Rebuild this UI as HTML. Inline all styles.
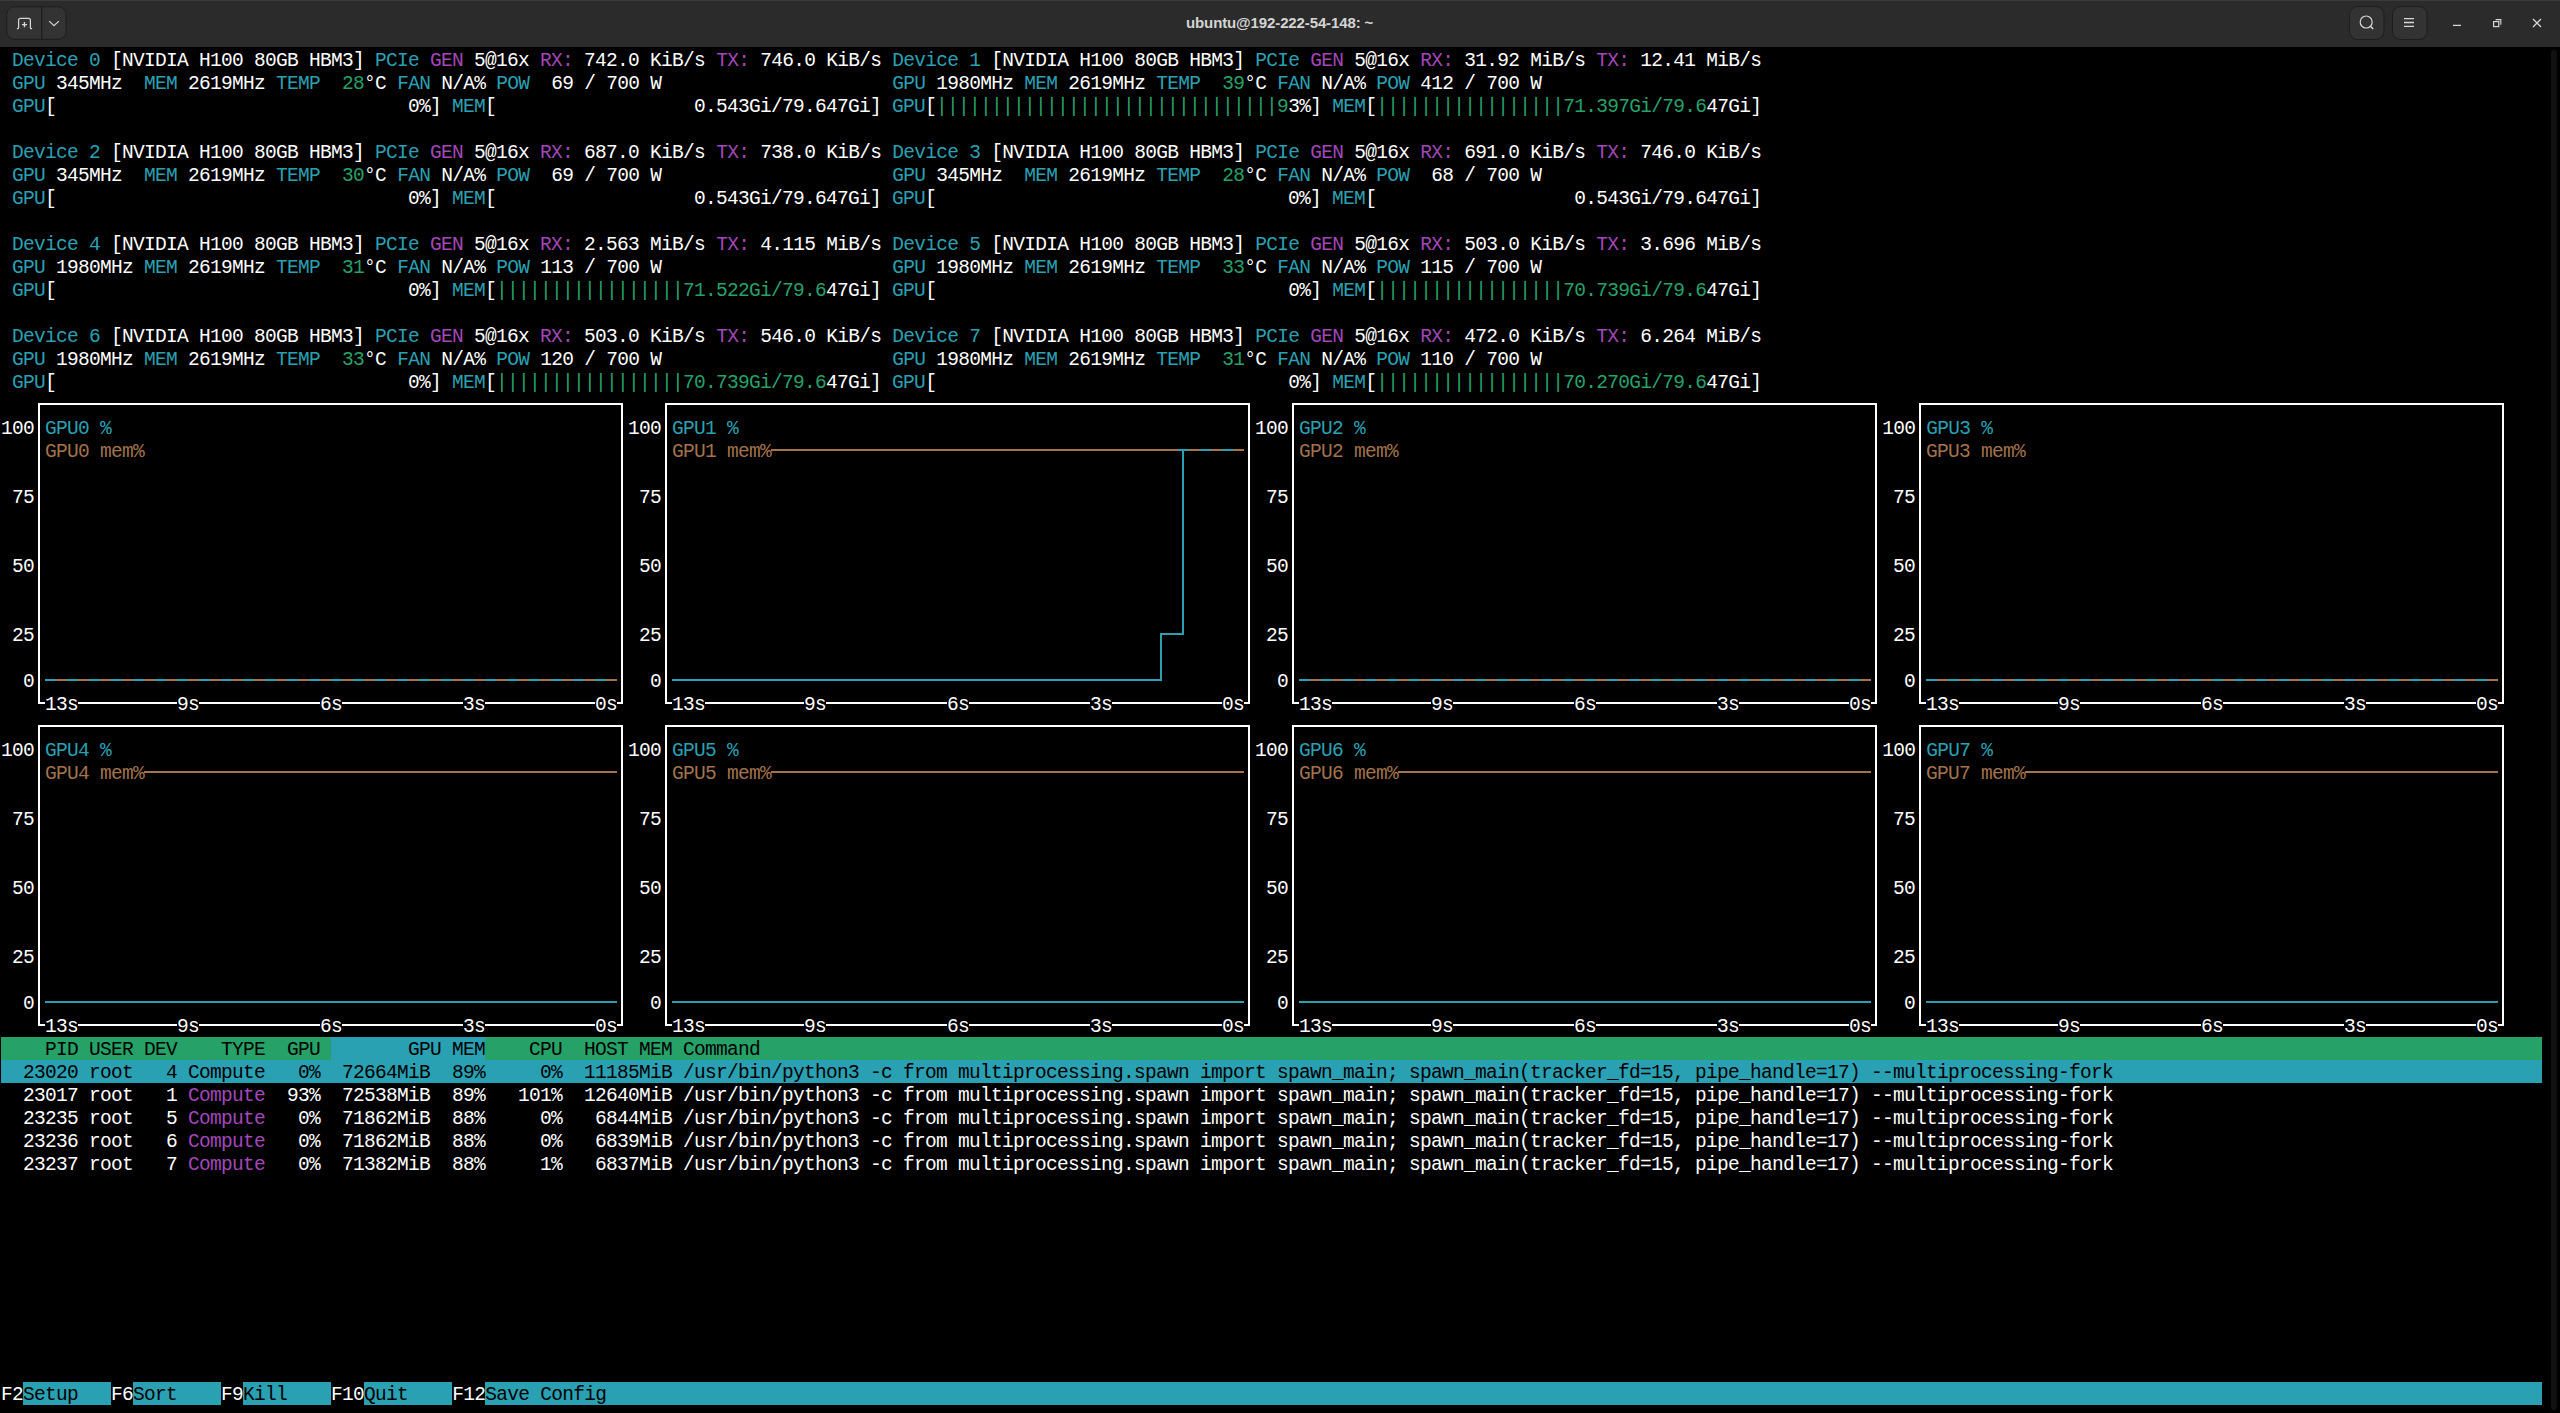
<!DOCTYPE html>
<html><head><meta charset="utf-8"><style>
html,body{margin:0;padding:0;background:#000;width:2560px;height:1413px;overflow:hidden}
#term{position:absolute;left:0;top:47px;width:2560px;height:1366px;background:#000}
#scr{position:absolute;left:0;top:0;width:2560px;height:1413px}
#scr i{position:absolute;display:block}
#scr p{position:absolute;left:1px;margin:0;white-space:pre;font-family:"Liberation Mono",monospace;font-size:19.5px;line-height:23px;height:23px;letter-spacing:-0.7015px}
#scr b{font-weight:normal}
</style></head><body>
<div style="position:absolute;left:0;top:0;width:2560px;height:47px;background:#2b2b2b;border-top:1px solid #3a3a3a;box-sizing:border-box"></div>
<svg style="position:absolute;left:0;top:0" width="2560" height="47" viewBox="0 0 2560 47">
  <rect x="6.6" y="6.8" width="59.6" height="32.5" rx="8" ry="8" fill="#333333" stroke="#1d1d1d" stroke-width="1"/>
  <rect x="41" y="7" width="1.2" height="32.5" fill="#1d1d1d"/>
  <path d="M16.9 28.5 H17.9 Q18.6 28.5 18.6 27.8 V20.3 Q18.6 18.4 20.5 18.4 H28.5 Q30.4 18.4 30.4 20.3 V27.8 Q30.4 28.5 31.1 28.5 H32.1" fill="none" stroke="#d6d6d6" stroke-width="1.25"/>
  <path d="M21.9 24.6 H27 M24.45 22.1 V27.2" fill="none" stroke="#d6d6d6" stroke-width="1.4"/>
  <path d="M49.2 21.1 L54 25.7 L58.9 21.1" fill="none" stroke="#d6d6d6" stroke-width="1.25"/>
  <rect x="2349.5" y="6.5" width="34.5" height="33" rx="8" ry="8" fill="#333333" stroke="#1d1d1d" stroke-width="1"/>
  <rect x="2392.5" y="6.5" width="34.5" height="33" rx="8" ry="8" fill="#333333" stroke="#1d1d1d" stroke-width="1"/>
  <circle cx="2366.2" cy="22" r="6" fill="none" stroke="#d6d6d6" stroke-width="1.2"/>
  <path d="M2370.4 26.2 L2373.2 29" fill="none" stroke="#d6d6d6" stroke-width="1.5"/>
  <path d="M2404 18.6 H2414 M2404 22.5 H2414 M2404 26.4 H2414" fill="none" stroke="#d6d6d6" stroke-width="1.3"/>
  <path d="M2453 25.4 H2461" fill="none" stroke="#d6d6d6" stroke-width="1.3"/>
  <rect x="2493.6" y="21.6" width="5.2" height="5" fill="none" stroke="#d6d6d6" stroke-width="1.2"/>
  <path d="M2495.6 19.6 H2500.8 V24.8" fill="none" stroke="#d6d6d6" stroke-width="1.1"/>
  <path d="M2533 19 L2541 27 M2541 19 L2533 27" fill="none" stroke="#d6d6d6" stroke-width="1.3"/>
</svg>
<div style="position:absolute;left:1186px;top:13px;width:186px;height:20px;font-family:'Liberation Sans',sans-serif;font-weight:bold;font-size:15px;color:#d4d4d4;white-space:nowrap;line-height:20px;letter-spacing:-0.12px" id="title">ubuntu@192-222-54-148: ~</div>

<div id="term"></div>
<div style="position:absolute;left:2551px;top:50px;width:6px;height:1360px;border-radius:3px;background:#111111"></div>
<div id="scr">
<i style="left:1px;top:1037px;width:330px;height:23px;background:#26a269"></i>
<i style="left:331px;top:1037px;width:154px;height:23px;background:#2aa1b3"></i>
<i style="left:485px;top:1037px;width:2057px;height:23px;background:#26a269"></i>
<i style="left:1px;top:1060px;width:2541px;height:23px;background:#2aa1b3"></i>
<i style="left:23px;top:1382px;width:88px;height:23px;background:#2aa1b3"></i>
<i style="left:133px;top:1382px;width:88px;height:23px;background:#2aa1b3"></i>
<i style="left:243px;top:1382px;width:88px;height:23px;background:#2aa1b3"></i>
<i style="left:364px;top:1382px;width:88px;height:23px;background:#2aa1b3"></i>
<i style="left:485px;top:1382px;width:2057px;height:23px;background:#2aa1b3"></i>
<i style="left:38px;top:403px;width:585px;height:2px;background:#ffffff"></i>
<i style="left:665px;top:403px;width:585px;height:2px;background:#ffffff"></i>
<i style="left:1292px;top:403px;width:585px;height:2px;background:#ffffff"></i>
<i style="left:1919px;top:403px;width:585px;height:2px;background:#ffffff"></i>
<i style="left:1178px;top:449px;width:11px;height:2px;background:#2aa1b3"></i>
<i style="left:1200px;top:449px;width:11px;height:2px;background:#2aa1b3"></i>
<i style="left:1222px;top:449px;width:11px;height:2px;background:#2aa1b3"></i>
<i style="left:771px;top:449px;width:407px;height:2px;background:#a2734c"></i>
<i style="left:1189px;top:449px;width:11px;height:2px;background:#a2734c"></i>
<i style="left:1211px;top:449px;width:11px;height:2px;background:#a2734c"></i>
<i style="left:1233px;top:449px;width:11px;height:2px;background:#a2734c"></i>
<i style="left:1160px;top:633px;width:24px;height:2px;background:#2aa1b3"></i>
<i style="left:45px;top:679px;width:11px;height:2px;background:#2aa1b3"></i>
<i style="left:67px;top:679px;width:11px;height:2px;background:#2aa1b3"></i>
<i style="left:89px;top:679px;width:11px;height:2px;background:#2aa1b3"></i>
<i style="left:111px;top:679px;width:11px;height:2px;background:#2aa1b3"></i>
<i style="left:133px;top:679px;width:11px;height:2px;background:#2aa1b3"></i>
<i style="left:155px;top:679px;width:11px;height:2px;background:#2aa1b3"></i>
<i style="left:177px;top:679px;width:11px;height:2px;background:#2aa1b3"></i>
<i style="left:199px;top:679px;width:11px;height:2px;background:#2aa1b3"></i>
<i style="left:221px;top:679px;width:11px;height:2px;background:#2aa1b3"></i>
<i style="left:243px;top:679px;width:11px;height:2px;background:#2aa1b3"></i>
<i style="left:265px;top:679px;width:11px;height:2px;background:#2aa1b3"></i>
<i style="left:287px;top:679px;width:11px;height:2px;background:#2aa1b3"></i>
<i style="left:309px;top:679px;width:11px;height:2px;background:#2aa1b3"></i>
<i style="left:331px;top:679px;width:11px;height:2px;background:#2aa1b3"></i>
<i style="left:353px;top:679px;width:11px;height:2px;background:#2aa1b3"></i>
<i style="left:375px;top:679px;width:11px;height:2px;background:#2aa1b3"></i>
<i style="left:397px;top:679px;width:11px;height:2px;background:#2aa1b3"></i>
<i style="left:419px;top:679px;width:11px;height:2px;background:#2aa1b3"></i>
<i style="left:441px;top:679px;width:11px;height:2px;background:#2aa1b3"></i>
<i style="left:463px;top:679px;width:11px;height:2px;background:#2aa1b3"></i>
<i style="left:485px;top:679px;width:11px;height:2px;background:#2aa1b3"></i>
<i style="left:507px;top:679px;width:11px;height:2px;background:#2aa1b3"></i>
<i style="left:529px;top:679px;width:11px;height:2px;background:#2aa1b3"></i>
<i style="left:551px;top:679px;width:11px;height:2px;background:#2aa1b3"></i>
<i style="left:573px;top:679px;width:11px;height:2px;background:#2aa1b3"></i>
<i style="left:595px;top:679px;width:11px;height:2px;background:#2aa1b3"></i>
<i style="left:672px;top:679px;width:490px;height:2px;background:#2aa1b3"></i>
<i style="left:1299px;top:679px;width:11px;height:2px;background:#2aa1b3"></i>
<i style="left:1321px;top:679px;width:11px;height:2px;background:#2aa1b3"></i>
<i style="left:1343px;top:679px;width:11px;height:2px;background:#2aa1b3"></i>
<i style="left:1365px;top:679px;width:11px;height:2px;background:#2aa1b3"></i>
<i style="left:1387px;top:679px;width:11px;height:2px;background:#2aa1b3"></i>
<i style="left:1409px;top:679px;width:11px;height:2px;background:#2aa1b3"></i>
<i style="left:1431px;top:679px;width:11px;height:2px;background:#2aa1b3"></i>
<i style="left:1453px;top:679px;width:11px;height:2px;background:#2aa1b3"></i>
<i style="left:1475px;top:679px;width:11px;height:2px;background:#2aa1b3"></i>
<i style="left:1497px;top:679px;width:11px;height:2px;background:#2aa1b3"></i>
<i style="left:1519px;top:679px;width:11px;height:2px;background:#2aa1b3"></i>
<i style="left:1541px;top:679px;width:11px;height:2px;background:#2aa1b3"></i>
<i style="left:1563px;top:679px;width:11px;height:2px;background:#2aa1b3"></i>
<i style="left:1585px;top:679px;width:11px;height:2px;background:#2aa1b3"></i>
<i style="left:1607px;top:679px;width:11px;height:2px;background:#2aa1b3"></i>
<i style="left:1629px;top:679px;width:11px;height:2px;background:#2aa1b3"></i>
<i style="left:1651px;top:679px;width:11px;height:2px;background:#2aa1b3"></i>
<i style="left:1673px;top:679px;width:11px;height:2px;background:#2aa1b3"></i>
<i style="left:1695px;top:679px;width:11px;height:2px;background:#2aa1b3"></i>
<i style="left:1717px;top:679px;width:11px;height:2px;background:#2aa1b3"></i>
<i style="left:1739px;top:679px;width:11px;height:2px;background:#2aa1b3"></i>
<i style="left:1761px;top:679px;width:11px;height:2px;background:#2aa1b3"></i>
<i style="left:1783px;top:679px;width:11px;height:2px;background:#2aa1b3"></i>
<i style="left:1805px;top:679px;width:11px;height:2px;background:#2aa1b3"></i>
<i style="left:1827px;top:679px;width:11px;height:2px;background:#2aa1b3"></i>
<i style="left:1849px;top:679px;width:11px;height:2px;background:#2aa1b3"></i>
<i style="left:1926px;top:679px;width:11px;height:2px;background:#2aa1b3"></i>
<i style="left:1948px;top:679px;width:11px;height:2px;background:#2aa1b3"></i>
<i style="left:1970px;top:679px;width:11px;height:2px;background:#2aa1b3"></i>
<i style="left:1992px;top:679px;width:11px;height:2px;background:#2aa1b3"></i>
<i style="left:2014px;top:679px;width:11px;height:2px;background:#2aa1b3"></i>
<i style="left:2036px;top:679px;width:11px;height:2px;background:#2aa1b3"></i>
<i style="left:2058px;top:679px;width:11px;height:2px;background:#2aa1b3"></i>
<i style="left:2080px;top:679px;width:11px;height:2px;background:#2aa1b3"></i>
<i style="left:2102px;top:679px;width:11px;height:2px;background:#2aa1b3"></i>
<i style="left:2124px;top:679px;width:11px;height:2px;background:#2aa1b3"></i>
<i style="left:2146px;top:679px;width:11px;height:2px;background:#2aa1b3"></i>
<i style="left:2168px;top:679px;width:11px;height:2px;background:#2aa1b3"></i>
<i style="left:2190px;top:679px;width:11px;height:2px;background:#2aa1b3"></i>
<i style="left:2212px;top:679px;width:11px;height:2px;background:#2aa1b3"></i>
<i style="left:2234px;top:679px;width:11px;height:2px;background:#2aa1b3"></i>
<i style="left:2256px;top:679px;width:11px;height:2px;background:#2aa1b3"></i>
<i style="left:2278px;top:679px;width:11px;height:2px;background:#2aa1b3"></i>
<i style="left:2300px;top:679px;width:11px;height:2px;background:#2aa1b3"></i>
<i style="left:2322px;top:679px;width:11px;height:2px;background:#2aa1b3"></i>
<i style="left:2344px;top:679px;width:11px;height:2px;background:#2aa1b3"></i>
<i style="left:2366px;top:679px;width:11px;height:2px;background:#2aa1b3"></i>
<i style="left:2388px;top:679px;width:11px;height:2px;background:#2aa1b3"></i>
<i style="left:2410px;top:679px;width:11px;height:2px;background:#2aa1b3"></i>
<i style="left:2432px;top:679px;width:11px;height:2px;background:#2aa1b3"></i>
<i style="left:2454px;top:679px;width:11px;height:2px;background:#2aa1b3"></i>
<i style="left:2476px;top:679px;width:11px;height:2px;background:#2aa1b3"></i>
<i style="left:56px;top:679px;width:11px;height:2px;background:#a2734c"></i>
<i style="left:78px;top:679px;width:11px;height:2px;background:#a2734c"></i>
<i style="left:100px;top:679px;width:11px;height:2px;background:#a2734c"></i>
<i style="left:122px;top:679px;width:11px;height:2px;background:#a2734c"></i>
<i style="left:144px;top:679px;width:11px;height:2px;background:#a2734c"></i>
<i style="left:166px;top:679px;width:11px;height:2px;background:#a2734c"></i>
<i style="left:188px;top:679px;width:11px;height:2px;background:#a2734c"></i>
<i style="left:210px;top:679px;width:11px;height:2px;background:#a2734c"></i>
<i style="left:232px;top:679px;width:11px;height:2px;background:#a2734c"></i>
<i style="left:254px;top:679px;width:11px;height:2px;background:#a2734c"></i>
<i style="left:276px;top:679px;width:11px;height:2px;background:#a2734c"></i>
<i style="left:298px;top:679px;width:11px;height:2px;background:#a2734c"></i>
<i style="left:320px;top:679px;width:11px;height:2px;background:#a2734c"></i>
<i style="left:342px;top:679px;width:11px;height:2px;background:#a2734c"></i>
<i style="left:364px;top:679px;width:11px;height:2px;background:#a2734c"></i>
<i style="left:386px;top:679px;width:11px;height:2px;background:#a2734c"></i>
<i style="left:408px;top:679px;width:11px;height:2px;background:#a2734c"></i>
<i style="left:430px;top:679px;width:11px;height:2px;background:#a2734c"></i>
<i style="left:452px;top:679px;width:11px;height:2px;background:#a2734c"></i>
<i style="left:474px;top:679px;width:11px;height:2px;background:#a2734c"></i>
<i style="left:496px;top:679px;width:11px;height:2px;background:#a2734c"></i>
<i style="left:518px;top:679px;width:11px;height:2px;background:#a2734c"></i>
<i style="left:540px;top:679px;width:11px;height:2px;background:#a2734c"></i>
<i style="left:562px;top:679px;width:11px;height:2px;background:#a2734c"></i>
<i style="left:584px;top:679px;width:11px;height:2px;background:#a2734c"></i>
<i style="left:606px;top:679px;width:11px;height:2px;background:#a2734c"></i>
<i style="left:1310px;top:679px;width:11px;height:2px;background:#a2734c"></i>
<i style="left:1332px;top:679px;width:11px;height:2px;background:#a2734c"></i>
<i style="left:1354px;top:679px;width:11px;height:2px;background:#a2734c"></i>
<i style="left:1376px;top:679px;width:11px;height:2px;background:#a2734c"></i>
<i style="left:1398px;top:679px;width:11px;height:2px;background:#a2734c"></i>
<i style="left:1420px;top:679px;width:11px;height:2px;background:#a2734c"></i>
<i style="left:1442px;top:679px;width:11px;height:2px;background:#a2734c"></i>
<i style="left:1464px;top:679px;width:11px;height:2px;background:#a2734c"></i>
<i style="left:1486px;top:679px;width:11px;height:2px;background:#a2734c"></i>
<i style="left:1508px;top:679px;width:11px;height:2px;background:#a2734c"></i>
<i style="left:1530px;top:679px;width:11px;height:2px;background:#a2734c"></i>
<i style="left:1552px;top:679px;width:11px;height:2px;background:#a2734c"></i>
<i style="left:1574px;top:679px;width:11px;height:2px;background:#a2734c"></i>
<i style="left:1596px;top:679px;width:11px;height:2px;background:#a2734c"></i>
<i style="left:1618px;top:679px;width:11px;height:2px;background:#a2734c"></i>
<i style="left:1640px;top:679px;width:11px;height:2px;background:#a2734c"></i>
<i style="left:1662px;top:679px;width:11px;height:2px;background:#a2734c"></i>
<i style="left:1684px;top:679px;width:11px;height:2px;background:#a2734c"></i>
<i style="left:1706px;top:679px;width:11px;height:2px;background:#a2734c"></i>
<i style="left:1728px;top:679px;width:11px;height:2px;background:#a2734c"></i>
<i style="left:1750px;top:679px;width:11px;height:2px;background:#a2734c"></i>
<i style="left:1772px;top:679px;width:11px;height:2px;background:#a2734c"></i>
<i style="left:1794px;top:679px;width:11px;height:2px;background:#a2734c"></i>
<i style="left:1816px;top:679px;width:11px;height:2px;background:#a2734c"></i>
<i style="left:1838px;top:679px;width:11px;height:2px;background:#a2734c"></i>
<i style="left:1860px;top:679px;width:11px;height:2px;background:#a2734c"></i>
<i style="left:1937px;top:679px;width:11px;height:2px;background:#a2734c"></i>
<i style="left:1959px;top:679px;width:11px;height:2px;background:#a2734c"></i>
<i style="left:1981px;top:679px;width:11px;height:2px;background:#a2734c"></i>
<i style="left:2003px;top:679px;width:11px;height:2px;background:#a2734c"></i>
<i style="left:2025px;top:679px;width:11px;height:2px;background:#a2734c"></i>
<i style="left:2047px;top:679px;width:11px;height:2px;background:#a2734c"></i>
<i style="left:2069px;top:679px;width:11px;height:2px;background:#a2734c"></i>
<i style="left:2091px;top:679px;width:11px;height:2px;background:#a2734c"></i>
<i style="left:2113px;top:679px;width:11px;height:2px;background:#a2734c"></i>
<i style="left:2135px;top:679px;width:11px;height:2px;background:#a2734c"></i>
<i style="left:2157px;top:679px;width:11px;height:2px;background:#a2734c"></i>
<i style="left:2179px;top:679px;width:11px;height:2px;background:#a2734c"></i>
<i style="left:2201px;top:679px;width:11px;height:2px;background:#a2734c"></i>
<i style="left:2223px;top:679px;width:11px;height:2px;background:#a2734c"></i>
<i style="left:2245px;top:679px;width:11px;height:2px;background:#a2734c"></i>
<i style="left:2267px;top:679px;width:11px;height:2px;background:#a2734c"></i>
<i style="left:2289px;top:679px;width:11px;height:2px;background:#a2734c"></i>
<i style="left:2311px;top:679px;width:11px;height:2px;background:#a2734c"></i>
<i style="left:2333px;top:679px;width:11px;height:2px;background:#a2734c"></i>
<i style="left:2355px;top:679px;width:11px;height:2px;background:#a2734c"></i>
<i style="left:2377px;top:679px;width:11px;height:2px;background:#a2734c"></i>
<i style="left:2399px;top:679px;width:11px;height:2px;background:#a2734c"></i>
<i style="left:2421px;top:679px;width:11px;height:2px;background:#a2734c"></i>
<i style="left:2443px;top:679px;width:11px;height:2px;background:#a2734c"></i>
<i style="left:2465px;top:679px;width:11px;height:2px;background:#a2734c"></i>
<i style="left:2487px;top:679px;width:11px;height:2px;background:#a2734c"></i>
<i style="left:38px;top:702px;width:7px;height:2px;background:#ffffff"></i>
<i style="left:78px;top:702px;width:99px;height:2px;background:#ffffff"></i>
<i style="left:199px;top:702px;width:121px;height:2px;background:#ffffff"></i>
<i style="left:342px;top:702px;width:121px;height:2px;background:#ffffff"></i>
<i style="left:485px;top:702px;width:110px;height:2px;background:#ffffff"></i>
<i style="left:617px;top:702px;width:6px;height:2px;background:#ffffff"></i>
<i style="left:665px;top:702px;width:7px;height:2px;background:#ffffff"></i>
<i style="left:705px;top:702px;width:99px;height:2px;background:#ffffff"></i>
<i style="left:826px;top:702px;width:121px;height:2px;background:#ffffff"></i>
<i style="left:969px;top:702px;width:121px;height:2px;background:#ffffff"></i>
<i style="left:1112px;top:702px;width:110px;height:2px;background:#ffffff"></i>
<i style="left:1244px;top:702px;width:6px;height:2px;background:#ffffff"></i>
<i style="left:1292px;top:702px;width:7px;height:2px;background:#ffffff"></i>
<i style="left:1332px;top:702px;width:99px;height:2px;background:#ffffff"></i>
<i style="left:1453px;top:702px;width:121px;height:2px;background:#ffffff"></i>
<i style="left:1596px;top:702px;width:121px;height:2px;background:#ffffff"></i>
<i style="left:1739px;top:702px;width:110px;height:2px;background:#ffffff"></i>
<i style="left:1871px;top:702px;width:6px;height:2px;background:#ffffff"></i>
<i style="left:1919px;top:702px;width:7px;height:2px;background:#ffffff"></i>
<i style="left:1959px;top:702px;width:99px;height:2px;background:#ffffff"></i>
<i style="left:2080px;top:702px;width:121px;height:2px;background:#ffffff"></i>
<i style="left:2223px;top:702px;width:121px;height:2px;background:#ffffff"></i>
<i style="left:2366px;top:702px;width:110px;height:2px;background:#ffffff"></i>
<i style="left:2498px;top:702px;width:6px;height:2px;background:#ffffff"></i>
<i style="left:38px;top:725px;width:585px;height:2px;background:#ffffff"></i>
<i style="left:665px;top:725px;width:585px;height:2px;background:#ffffff"></i>
<i style="left:1292px;top:725px;width:585px;height:2px;background:#ffffff"></i>
<i style="left:1919px;top:725px;width:585px;height:2px;background:#ffffff"></i>
<i style="left:144px;top:771px;width:473px;height:2px;background:#a2734c"></i>
<i style="left:771px;top:771px;width:473px;height:2px;background:#a2734c"></i>
<i style="left:1398px;top:771px;width:473px;height:2px;background:#a2734c"></i>
<i style="left:2025px;top:771px;width:473px;height:2px;background:#a2734c"></i>
<i style="left:45px;top:1001px;width:572px;height:2px;background:#2aa1b3"></i>
<i style="left:672px;top:1001px;width:572px;height:2px;background:#2aa1b3"></i>
<i style="left:1299px;top:1001px;width:572px;height:2px;background:#2aa1b3"></i>
<i style="left:1926px;top:1001px;width:572px;height:2px;background:#2aa1b3"></i>
<i style="left:38px;top:1024px;width:7px;height:2px;background:#ffffff"></i>
<i style="left:78px;top:1024px;width:99px;height:2px;background:#ffffff"></i>
<i style="left:199px;top:1024px;width:121px;height:2px;background:#ffffff"></i>
<i style="left:342px;top:1024px;width:121px;height:2px;background:#ffffff"></i>
<i style="left:485px;top:1024px;width:110px;height:2px;background:#ffffff"></i>
<i style="left:617px;top:1024px;width:6px;height:2px;background:#ffffff"></i>
<i style="left:665px;top:1024px;width:7px;height:2px;background:#ffffff"></i>
<i style="left:705px;top:1024px;width:99px;height:2px;background:#ffffff"></i>
<i style="left:826px;top:1024px;width:121px;height:2px;background:#ffffff"></i>
<i style="left:969px;top:1024px;width:121px;height:2px;background:#ffffff"></i>
<i style="left:1112px;top:1024px;width:110px;height:2px;background:#ffffff"></i>
<i style="left:1244px;top:1024px;width:6px;height:2px;background:#ffffff"></i>
<i style="left:1292px;top:1024px;width:7px;height:2px;background:#ffffff"></i>
<i style="left:1332px;top:1024px;width:99px;height:2px;background:#ffffff"></i>
<i style="left:1453px;top:1024px;width:121px;height:2px;background:#ffffff"></i>
<i style="left:1596px;top:1024px;width:121px;height:2px;background:#ffffff"></i>
<i style="left:1739px;top:1024px;width:110px;height:2px;background:#ffffff"></i>
<i style="left:1871px;top:1024px;width:6px;height:2px;background:#ffffff"></i>
<i style="left:1919px;top:1024px;width:7px;height:2px;background:#ffffff"></i>
<i style="left:1959px;top:1024px;width:99px;height:2px;background:#ffffff"></i>
<i style="left:2080px;top:1024px;width:121px;height:2px;background:#ffffff"></i>
<i style="left:2223px;top:1024px;width:121px;height:2px;background:#ffffff"></i>
<i style="left:2366px;top:1024px;width:110px;height:2px;background:#ffffff"></i>
<i style="left:2498px;top:1024px;width:6px;height:2px;background:#ffffff"></i>
<i style="left:38px;top:403px;width:2px;height:301px;background:#ffffff"></i>
<i style="left:38px;top:725px;width:2px;height:301px;background:#ffffff"></i>
<i style="left:621px;top:403px;width:2px;height:301px;background:#ffffff"></i>
<i style="left:621px;top:725px;width:2px;height:301px;background:#ffffff"></i>
<i style="left:665px;top:403px;width:2px;height:301px;background:#ffffff"></i>
<i style="left:665px;top:725px;width:2px;height:301px;background:#ffffff"></i>
<i style="left:1160px;top:633px;width:2px;height:48px;background:#2aa1b3"></i>
<i style="left:1182px;top:449px;width:2px;height:186px;background:#2aa1b3"></i>
<i style="left:1248px;top:403px;width:2px;height:301px;background:#ffffff"></i>
<i style="left:1248px;top:725px;width:2px;height:301px;background:#ffffff"></i>
<i style="left:1292px;top:403px;width:2px;height:301px;background:#ffffff"></i>
<i style="left:1292px;top:725px;width:2px;height:301px;background:#ffffff"></i>
<i style="left:1875px;top:403px;width:2px;height:301px;background:#ffffff"></i>
<i style="left:1875px;top:725px;width:2px;height:301px;background:#ffffff"></i>
<i style="left:1919px;top:403px;width:2px;height:301px;background:#ffffff"></i>
<i style="left:1919px;top:725px;width:2px;height:301px;background:#ffffff"></i>
<i style="left:2502px;top:403px;width:2px;height:301px;background:#ffffff"></i>
<i style="left:2502px;top:725px;width:2px;height:301px;background:#ffffff"></i>
<p style="top:50px"><b style="color:#ffffff"> </b><b style="color:#2aa1b3">Device 0 </b><b style="color:#ffffff">[NVIDIA H100 80GB HBM3] </b><b style="color:#2aa1b3">PCIe </b><b style="color:#a347ba">GEN </b><b style="color:#ffffff">5@16x </b><b style="color:#a347ba">RX: </b><b style="color:#ffffff">742.0 KiB/s </b><b style="color:#a347ba">TX: </b><b style="color:#ffffff">746.0 KiB/s </b><b style="color:#2aa1b3">Device 1 </b><b style="color:#ffffff">[NVIDIA H100 80GB HBM3] </b><b style="color:#2aa1b3">PCIe </b><b style="color:#a347ba">GEN </b><b style="color:#ffffff">5@16x </b><b style="color:#a347ba">RX: </b><b style="color:#ffffff">31.92 MiB/s </b><b style="color:#a347ba">TX: </b><b style="color:#ffffff">12.41 MiB/s</b></p>
<p style="top:73px"><b style="color:#ffffff"> </b><b style="color:#2aa1b3">GPU </b><b style="color:#ffffff">345MHz  </b><b style="color:#2aa1b3">MEM </b><b style="color:#ffffff">2619MHz </b><b style="color:#2aa1b3">TEMP  </b><b style="color:#26a269">28</b><b style="color:#ffffff">°C </b><b style="color:#2aa1b3">FAN </b><b style="color:#ffffff">N/A% </b><b style="color:#2aa1b3">POW  </b><b style="color:#ffffff">69 / 700 W                     </b><b style="color:#2aa1b3">GPU </b><b style="color:#ffffff">1980MHz </b><b style="color:#2aa1b3">MEM </b><b style="color:#ffffff">2619MHz </b><b style="color:#2aa1b3">TEMP  </b><b style="color:#26a269">39</b><b style="color:#ffffff">°C </b><b style="color:#2aa1b3">FAN </b><b style="color:#ffffff">N/A% </b><b style="color:#2aa1b3">POW </b><b style="color:#ffffff">412 / 700 W</b></p>
<p style="top:96px"><b style="color:#ffffff"> </b><b style="color:#2aa1b3">GPU</b><b style="color:#ffffff">[                                0%] </b><b style="color:#2aa1b3">MEM</b><b style="color:#ffffff">[                  0.543Gi/79.647Gi] </b><b style="color:#2aa1b3">GPU</b><b style="color:#ffffff">[</b><b style="color:#26a269">|||||||||||||||||||||||||||||||9</b><b style="color:#ffffff">3%] </b><b style="color:#2aa1b3">MEM</b><b style="color:#ffffff">[</b><b style="color:#26a269">|||||||||||||||||71.397Gi/79.6</b><b style="color:#ffffff">47Gi]</b></p>
<p style="top:142px"><b style="color:#ffffff"> </b><b style="color:#2aa1b3">Device 2 </b><b style="color:#ffffff">[NVIDIA H100 80GB HBM3] </b><b style="color:#2aa1b3">PCIe </b><b style="color:#a347ba">GEN </b><b style="color:#ffffff">5@16x </b><b style="color:#a347ba">RX: </b><b style="color:#ffffff">687.0 KiB/s </b><b style="color:#a347ba">TX: </b><b style="color:#ffffff">738.0 KiB/s </b><b style="color:#2aa1b3">Device 3 </b><b style="color:#ffffff">[NVIDIA H100 80GB HBM3] </b><b style="color:#2aa1b3">PCIe </b><b style="color:#a347ba">GEN </b><b style="color:#ffffff">5@16x </b><b style="color:#a347ba">RX: </b><b style="color:#ffffff">691.0 KiB/s </b><b style="color:#a347ba">TX: </b><b style="color:#ffffff">746.0 KiB/s</b></p>
<p style="top:165px"><b style="color:#ffffff"> </b><b style="color:#2aa1b3">GPU </b><b style="color:#ffffff">345MHz  </b><b style="color:#2aa1b3">MEM </b><b style="color:#ffffff">2619MHz </b><b style="color:#2aa1b3">TEMP  </b><b style="color:#26a269">30</b><b style="color:#ffffff">°C </b><b style="color:#2aa1b3">FAN </b><b style="color:#ffffff">N/A% </b><b style="color:#2aa1b3">POW  </b><b style="color:#ffffff">69 / 700 W                     </b><b style="color:#2aa1b3">GPU </b><b style="color:#ffffff">345MHz  </b><b style="color:#2aa1b3">MEM </b><b style="color:#ffffff">2619MHz </b><b style="color:#2aa1b3">TEMP  </b><b style="color:#26a269">28</b><b style="color:#ffffff">°C </b><b style="color:#2aa1b3">FAN </b><b style="color:#ffffff">N/A% </b><b style="color:#2aa1b3">POW  </b><b style="color:#ffffff">68 / 700 W</b></p>
<p style="top:188px"><b style="color:#ffffff"> </b><b style="color:#2aa1b3">GPU</b><b style="color:#ffffff">[                                0%] </b><b style="color:#2aa1b3">MEM</b><b style="color:#ffffff">[                  0.543Gi/79.647Gi] </b><b style="color:#2aa1b3">GPU</b><b style="color:#ffffff">[                                0%] </b><b style="color:#2aa1b3">MEM</b><b style="color:#ffffff">[                  0.543Gi/79.647Gi]</b></p>
<p style="top:234px"><b style="color:#ffffff"> </b><b style="color:#2aa1b3">Device 4 </b><b style="color:#ffffff">[NVIDIA H100 80GB HBM3] </b><b style="color:#2aa1b3">PCIe </b><b style="color:#a347ba">GEN </b><b style="color:#ffffff">5@16x </b><b style="color:#a347ba">RX: </b><b style="color:#ffffff">2.563 MiB/s </b><b style="color:#a347ba">TX: </b><b style="color:#ffffff">4.115 MiB/s </b><b style="color:#2aa1b3">Device 5 </b><b style="color:#ffffff">[NVIDIA H100 80GB HBM3] </b><b style="color:#2aa1b3">PCIe </b><b style="color:#a347ba">GEN </b><b style="color:#ffffff">5@16x </b><b style="color:#a347ba">RX: </b><b style="color:#ffffff">503.0 KiB/s </b><b style="color:#a347ba">TX: </b><b style="color:#ffffff">3.696 MiB/s</b></p>
<p style="top:257px"><b style="color:#ffffff"> </b><b style="color:#2aa1b3">GPU </b><b style="color:#ffffff">1980MHz </b><b style="color:#2aa1b3">MEM </b><b style="color:#ffffff">2619MHz </b><b style="color:#2aa1b3">TEMP  </b><b style="color:#26a269">31</b><b style="color:#ffffff">°C </b><b style="color:#2aa1b3">FAN </b><b style="color:#ffffff">N/A% </b><b style="color:#2aa1b3">POW </b><b style="color:#ffffff">113 / 700 W                     </b><b style="color:#2aa1b3">GPU </b><b style="color:#ffffff">1980MHz </b><b style="color:#2aa1b3">MEM </b><b style="color:#ffffff">2619MHz </b><b style="color:#2aa1b3">TEMP  </b><b style="color:#26a269">33</b><b style="color:#ffffff">°C </b><b style="color:#2aa1b3">FAN </b><b style="color:#ffffff">N/A% </b><b style="color:#2aa1b3">POW </b><b style="color:#ffffff">115 / 700 W</b></p>
<p style="top:280px"><b style="color:#ffffff"> </b><b style="color:#2aa1b3">GPU</b><b style="color:#ffffff">[                                0%] </b><b style="color:#2aa1b3">MEM</b><b style="color:#ffffff">[</b><b style="color:#26a269">|||||||||||||||||71.522Gi/79.6</b><b style="color:#ffffff">47Gi] </b><b style="color:#2aa1b3">GPU</b><b style="color:#ffffff">[                                0%] </b><b style="color:#2aa1b3">MEM</b><b style="color:#ffffff">[</b><b style="color:#26a269">|||||||||||||||||70.739Gi/79.6</b><b style="color:#ffffff">47Gi]</b></p>
<p style="top:326px"><b style="color:#ffffff"> </b><b style="color:#2aa1b3">Device 6 </b><b style="color:#ffffff">[NVIDIA H100 80GB HBM3] </b><b style="color:#2aa1b3">PCIe </b><b style="color:#a347ba">GEN </b><b style="color:#ffffff">5@16x </b><b style="color:#a347ba">RX: </b><b style="color:#ffffff">503.0 KiB/s </b><b style="color:#a347ba">TX: </b><b style="color:#ffffff">546.0 KiB/s </b><b style="color:#2aa1b3">Device 7 </b><b style="color:#ffffff">[NVIDIA H100 80GB HBM3] </b><b style="color:#2aa1b3">PCIe </b><b style="color:#a347ba">GEN </b><b style="color:#ffffff">5@16x </b><b style="color:#a347ba">RX: </b><b style="color:#ffffff">472.0 KiB/s </b><b style="color:#a347ba">TX: </b><b style="color:#ffffff">6.264 MiB/s</b></p>
<p style="top:349px"><b style="color:#ffffff"> </b><b style="color:#2aa1b3">GPU </b><b style="color:#ffffff">1980MHz </b><b style="color:#2aa1b3">MEM </b><b style="color:#ffffff">2619MHz </b><b style="color:#2aa1b3">TEMP  </b><b style="color:#26a269">33</b><b style="color:#ffffff">°C </b><b style="color:#2aa1b3">FAN </b><b style="color:#ffffff">N/A% </b><b style="color:#2aa1b3">POW </b><b style="color:#ffffff">120 / 700 W                     </b><b style="color:#2aa1b3">GPU </b><b style="color:#ffffff">1980MHz </b><b style="color:#2aa1b3">MEM </b><b style="color:#ffffff">2619MHz </b><b style="color:#2aa1b3">TEMP  </b><b style="color:#26a269">31</b><b style="color:#ffffff">°C </b><b style="color:#2aa1b3">FAN </b><b style="color:#ffffff">N/A% </b><b style="color:#2aa1b3">POW </b><b style="color:#ffffff">110 / 700 W</b></p>
<p style="top:372px"><b style="color:#ffffff"> </b><b style="color:#2aa1b3">GPU</b><b style="color:#ffffff">[                                0%] </b><b style="color:#2aa1b3">MEM</b><b style="color:#ffffff">[</b><b style="color:#26a269">|||||||||||||||||70.739Gi/79.6</b><b style="color:#ffffff">47Gi] </b><b style="color:#2aa1b3">GPU</b><b style="color:#ffffff">[                                0%] </b><b style="color:#2aa1b3">MEM</b><b style="color:#ffffff">[</b><b style="color:#26a269">|||||||||||||||||70.270Gi/79.6</b><b style="color:#ffffff">47Gi]</b></p>
<p style="top:418px"><b style="color:#ffffff">100 </b><b style="color:#2aa1b3">GPU0 %                                               </b><b style="color:#ffffff">100 </b><b style="color:#2aa1b3">GPU1 %                                               </b><b style="color:#ffffff">100 </b><b style="color:#2aa1b3">GPU2 %                                               </b><b style="color:#ffffff">100 </b><b style="color:#2aa1b3">GPU3 %</b></p>
<p style="top:441px"><b style="color:#ffffff">    </b><b style="color:#a2734c">GPU0 mem%                                                GPU1 mem%                                                GPU2 mem%                                                GPU3 mem%</b></p>
<p style="top:487px"><b style="color:#ffffff"> 75                                                       75                                                       75                                                       75</b></p>
<p style="top:556px"><b style="color:#ffffff"> 50                                                       50                                                       50                                                       50</b></p>
<p style="top:625px"><b style="color:#ffffff"> 25                                                       25                                                       25                                                       25</b></p>
<p style="top:671px"><b style="color:#ffffff">  0                                                        0                                                        0                                                        0</b></p>
<p style="top:694px"><b style="color:#ffffff">    13s         9s           6s           3s          0s     13s         9s           6s           3s          0s     13s         9s           6s           3s          0s     13s         9s           6s           3s          0s</b></p>
<p style="top:740px"><b style="color:#ffffff">100 </b><b style="color:#2aa1b3">GPU4 %                                               </b><b style="color:#ffffff">100 </b><b style="color:#2aa1b3">GPU5 %                                               </b><b style="color:#ffffff">100 </b><b style="color:#2aa1b3">GPU6 %                                               </b><b style="color:#ffffff">100 </b><b style="color:#2aa1b3">GPU7 %</b></p>
<p style="top:763px"><b style="color:#ffffff">    </b><b style="color:#a2734c">GPU4 mem%                                                GPU5 mem%                                                GPU6 mem%                                                GPU7 mem%</b></p>
<p style="top:809px"><b style="color:#ffffff"> 75                                                       75                                                       75                                                       75</b></p>
<p style="top:878px"><b style="color:#ffffff"> 50                                                       50                                                       50                                                       50</b></p>
<p style="top:947px"><b style="color:#ffffff"> 25                                                       25                                                       25                                                       25</b></p>
<p style="top:993px"><b style="color:#ffffff">  0                                                        0                                                        0                                                        0</b></p>
<p style="top:1016px"><b style="color:#ffffff">    13s         9s           6s           3s          0s     13s         9s           6s           3s          0s     13s         9s           6s           3s          0s     13s         9s           6s           3s          0s</b></p>
<p style="top:1039px"><b style="color:#000000">    PID USER DEV    TYPE  GPU        GPU MEM    CPU  HOST MEM Command</b></p>
<p style="top:1062px"><b style="color:#ffffff">  </b><b style="color:#000000">23020 root   4 Compute   0%  72664MiB  89%     0%  11185MiB /usr/bin/python3 -c from multiprocessing.spawn import spawn_main; spawn_main(tracker_fd=15, pipe_handle=17) --multiprocessing-fork</b></p>
<p style="top:1085px"><b style="color:#ffffff">  23017 root   1 </b><b style="color:#a347ba">Compute  </b><b style="color:#ffffff">93%  72538MiB  89%   101%  12640MiB /usr/bin/python3 -c from multiprocessing.spawn import spawn_main; spawn_main(tracker_fd=15, pipe_handle=17) --multiprocessing-fork</b></p>
<p style="top:1108px"><b style="color:#ffffff">  23235 root   5 </b><b style="color:#a347ba">Compute   </b><b style="color:#ffffff">0%  71862MiB  88%     0%   6844MiB /usr/bin/python3 -c from multiprocessing.spawn import spawn_main; spawn_main(tracker_fd=15, pipe_handle=17) --multiprocessing-fork</b></p>
<p style="top:1131px"><b style="color:#ffffff">  23236 root   6 </b><b style="color:#a347ba">Compute   </b><b style="color:#ffffff">0%  71862MiB  88%     0%   6839MiB /usr/bin/python3 -c from multiprocessing.spawn import spawn_main; spawn_main(tracker_fd=15, pipe_handle=17) --multiprocessing-fork</b></p>
<p style="top:1154px"><b style="color:#ffffff">  23237 root   7 </b><b style="color:#a347ba">Compute   </b><b style="color:#ffffff">0%  71382MiB  88%     1%   6837MiB /usr/bin/python3 -c from multiprocessing.spawn import spawn_main; spawn_main(tracker_fd=15, pipe_handle=17) --multiprocessing-fork</b></p>
<p style="top:1384px"><b style="color:#ffffff">F2</b><b style="color:#000000">Setup   </b><b style="color:#ffffff">F6</b><b style="color:#000000">Sort    </b><b style="color:#ffffff">F9</b><b style="color:#000000">Kill    </b><b style="color:#ffffff">F10</b><b style="color:#000000">Quit    </b><b style="color:#ffffff">F12</b><b style="color:#000000">Save Config</b></p>
</div>
</body></html>
